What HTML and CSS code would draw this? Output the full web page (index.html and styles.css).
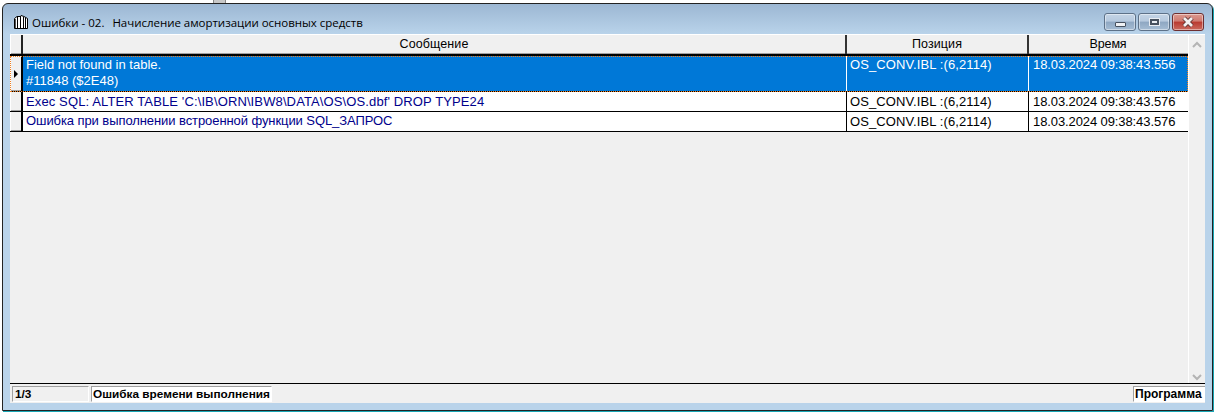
FILE: index.html
```html
<!DOCTYPE html>
<html lang="ru">
<head>
<meta charset="utf-8">
<title>Ошибки</title>
<link rel="stylesheet" href="styles.css">
</head>
<body>
<div class="behind"></div>
<div class="window">
  <div class="titlebar">
    <svg class="app-icon" width="14" height="14" viewBox="0 0 14 14"><path d="M.5 3.500V13.500H13.500V3.500L10 1.500 7 .5 6 1.500H3L.5 3.500Z" fill="#fff" stroke="#000"/><path d="M3.500 2V13M6.500 1V13M9.500 2V13M11.500 3V13" fill="none" stroke="#000"/><path d="M1.500 4V13" stroke="#555"/></svg>
    <span class="title">Ошибки - 02.&nbsp;&nbsp;<span class="title-rest">Начисление амортизации основных средств</span></span>
    <div class="controls">
      <div class="btn"><span class="min-glyph"></span></div>
      <div class="btn"><span class="max-glyph"></span></div>
      <div class="btn close"><svg width="16" height="12" viewBox="0 0 16 12"><path d="M4 2l8 8M12 2l-8 8" stroke="#5a3030" stroke-width="4.500" fill="none"/><path d="M4 2l8 8M12 2l-8 8" stroke="#f4f0f0" stroke-width="2.800" fill="none"/></svg></div>
    </div>
  </div>
  <div class="client">
    <div class="main">
      <div class="grid">
        <div class="row header">
          <div class="ind"></div>
          <div class="cell msg">Сообщение</div>
          <div class="cell pos">Позиция</div>
          <div class="cell time">Время</div>
        </div>
        <div class="row selected">
          <div class="ind"><span class="arrow"></span></div>
          <div class="cell msg">Field not found in table.<br>#11848 ($2E48)</div>
          <div class="cell pos">OS_CONV.IBL :(6,2114)</div>
          <div class="cell time">18.03.2024 09:38:43.556</div>
        </div>
        <div class="row">
          <div class="ind"></div>
          <div class="cell msg blue latin">Exec SQL: ALTER TABLE 'C:\IB\ORN\IBW8\DATA\OS\OS.dbf' DROP TYPE24</div>
          <div class="cell pos">OS_CONV.IBL :(6,2114)</div>
          <div class="cell time">18.03.2024 09:38:43.576</div>
        </div>
        <div class="row">
          <div class="ind"></div>
          <div class="cell msg blue cyr">Ошибка при выполнении встроенной функции SQL_ЗАПРОС</div>
          <div class="cell pos">OS_CONV.IBL :(6,2114)</div>
          <div class="cell time">18.03.2024 09:38:43.576</div>
        </div>
      </div>
      <div class="scrollbar">
        <svg width="16" height="12" viewBox="0 0 16 12"><path d="M4 8l4-4 4 4" fill="none" stroke="#b4b4b4" stroke-width="2"/></svg>
        <svg width="16" height="12" viewBox="0 0 16 12"><path d="M4 4l4 4 4-4" fill="none" stroke="#b4b4b4" stroke-width="2"/></svg>
      </div>
    </div>
    <div class="status">
      <div class="panel count">1/3</div>
      <div class="panel text">Ошибка времени выполнения</div>
      <div class="spacer"></div>
      <div class="panel prog">Программа</div>
    </div>
  </div>
</div>
</body>
</html>
```
FILE: styles.css
```css
* { box-sizing: border-box; }
html, body { margin: 0; height: 414px; overflow: hidden; background: #fff; }
body { padding: 3px 4px 3px 2px; position: relative; font-family: "Liberation Sans", Arial, sans-serif; }
.behind { position: absolute; left: 213px; top: 0; width: 13px; height: 3px; background: #c8c8c8; border-left: 1px solid #888; border-right: 1px solid #888; }
.window {
  height: 408px; display: flex; flex-direction: column;
  border: 1px solid #222; border-radius: 6px 6px 0 0;
  background: linear-gradient(#9cb7d3, #b9d3ea 30px);
  padding: 0 7px 7px 7px;
  box-shadow: 1px 1px 0 #19a6b5;
  position: relative; z-index: 1;
}
.titlebar { height: 30px; flex: none; display: flex; align-items: center; padding: 6px 0 0 4px; }
.app-icon { flex: none; margin-right: 5px; }
.title { font-family: "Open Sans", "Noto Sans", sans-serif; font-size: 11.500px; color: #000; white-space: nowrap; margin-left: -1px; }
.title-rest { margin-left: 2px; letter-spacing: -.03px; }
.controls { margin-left: auto; display: flex; gap: 2px; align-self: flex-start; margin-top: 3px; margin-right: 1px; }
.btn {
  width: 32px; height: 18px; border: 1px solid #5d7188; border-radius: 3px;
  background: linear-gradient(#c4d4e6 0, #b6c9de 45%, #8ea7c2 50%, #a6bdd4 100%);
  box-shadow: inset 0 0 0 1px rgba(255,255,255,.45);
  display: flex; align-items: center; justify-content: center;
}
.close { border-color: #6e2f30; background: linear-gradient(#dc9a90 0, #cf7a70 45%, #b93a30 50%, #cb6a5e 100%); }
.min-glyph { width: 11px; height: 5px; margin-top: 4px; background: #f0f2f5; border: 1px solid #46505e; border-radius: 1px; }
.max-glyph { width: 9px; height: 6px; background: #e8ecf2; border: 2px solid #46505e; outline: 1px solid #e8ecf2; }
.client { flex: 1; display: flex; flex-direction: column; background: #f0f0f0; min-height: 0; }
.main { flex: 1; display: flex; min-height: 0; border-top: 1px solid #fff; border-bottom: 1px solid #000; }
.grid { flex: 1; min-width: 0; }
.row { display: flex; height: 20px; border-bottom: 1px solid #000; background: #fff; font-size: 13px; color: #000; }
.ind { width: 13px; flex: none; background: #f0f0f0; border-right: 2px solid #000; border-left: 1px solid #fff; display: flex; align-items: center; justify-content: center; box-shadow: inset 0 -1px 0 #a0a0a0; }
.cell { padding: 2px 0 0 3px; white-space: nowrap; overflow: hidden; border-right: 1px solid #000; line-height: 15px; }
.msg { width: 824px; flex: none; }
.pos { width: 182px; flex: none; letter-spacing: .1px; }
.time { width: 160px; flex: none; padding-left: 4px; border-right: none; letter-spacing: -.1px; }
.blue { color: #00008b; }
.latin { letter-spacing: .12px; }
.cyr { letter-spacing: -.08px; padding-top: 1px; }
.header { height: 21px; background: #f0f0f0; border-bottom: 2px solid #000; }
.header .ind { border-right: 2px solid #222; }
.header .cell { text-align: center; padding: 2px 0 0; border-right: 2px solid #333; box-shadow: inset 0 -1px 0 #a0a0a0; font-size: 12.500px; }
.header .time { border-right: none; width: 160px; padding-left: 0; padding-right: 2px; }
.header .msg { width: 824px; letter-spacing: .1px; }
.selected { height: 36px; background: #0078d7; color: #fff; outline: 1px dotted #f08020; outline-offset: -1px; border-bottom: 1px solid #000; }
.selected .cell { line-height: 16px; border-right: 1px solid #fff; padding-top: 1px; }
.selected .time { border-right: none; }
.arrow { width: 0; height: 0; border-left: 4px solid #000; border-top: 4px solid transparent; border-bottom: 4px solid transparent; }
.scrollbar { width: 17px; flex: none; display: flex; flex-direction: column; justify-content: space-between; padding: 4px 0 0; background: #f0f0f0; border-left: 1px solid #fff; }
.status { height: 19px; flex: none; display: flex; gap: 2px; padding: 2px 0 1px 2px; font-size: 11.800px; font-weight: 700; align-items: stretch; }
.panel { border: 1px solid; border-color: #a0a0a0 #fff #fff #a0a0a0; padding: 0 0 0 1px; line-height: 14px; white-space: nowrap; background: #f0f0f0; }
.count { width: 77px; padding-left: 2px; }
.text { width: 181px; background: #fff; }
.spacer { flex: 1; }
.prog { width: 72px; background: #fff; border-right: none; font-size: 12px; }
```
